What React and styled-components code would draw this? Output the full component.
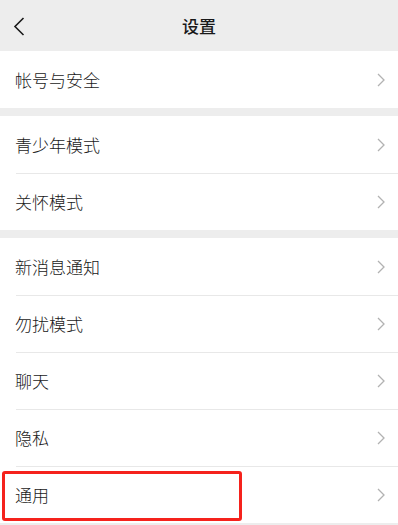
import styled, { createGlobalStyle } from "styled-components"

const Global = createGlobalStyle`
  html, body {
    margin: 0;
    padding: 0;
    background: #ededed;
    font-family: "Noto Sans CJK SC", "Noto Sans", sans-serif;
  }
`

const Page = styled.div`
  width: 398px;
  min-height: 525px;
  background: #ededed;
`

const Header = styled.header`
  height: 51px;
  display: flex;
  align-items: center;
  justify-content: center;
  position: relative;
`

const Back = styled.button`
  position: absolute;
  left: 8px;
  top: 13px;
  width: 22px;
  height: 26px;
  border: none;
  background: none;
  padding: 0;
  display: flex;
  align-items: center;
  justify-content: center;
`

const Title = styled.h1`
  margin: 0;
  font-size: 17px;
  font-weight: 500;
  color: #191919;
`

const Section = styled.div`
  background: #fff;
  margin-bottom: 8px;
`

const Row = styled.div`
  height: 57px;
  display: flex;
  align-items: center;
  justify-content: space-between;
  padding: 0 13px 0 15px;
  position: relative;
  box-sizing: border-box;

  & + &::before {
    content: "";
    position: absolute;
    top: 0;
    left: 16px;
    right: 0;
    height: 1px;
    background: #e8e8e8;
  }
`

const Label = styled.span`
  font-size: 17px;
  font-weight: 300;
  color: #191919;
`

const Highlight = styled.div`
  position: absolute;
  left: 2px;
  top: 5px;
  width: 240px;
  height: 50px;
  border: 3px solid #f5221c;
  border-radius: 3px;
  box-sizing: border-box;
`

const Chevron = () => (
  <svg width="8" height="14" viewBox="0 0 8 14">
    <path d="M1 1 L7 7 L1 13" fill="none" stroke="#b2b2b2" strokeWidth="1.3" />
  </svg>
)

const groups = [
  ["帐号与安全"],
  ["青少年模式", "关怀模式"],
  ["新消息通知", "勿扰模式", "聊天", "隐私", "通用"],
]

export default function App() {
  return (
    <Page>
      <Global />
      <Header>
        <Back>
          <svg width="12" height="19" viewBox="0 0 12 19">
            <path d="M10.5 1 L2 9.5 L10.5 18" fill="none" stroke="#191919" strokeWidth="1.6" />
          </svg>
        </Back>
        <Title>设置</Title>
      </Header>
      {groups.map((items, i) => (
        <Section key={i}>
          {items.map((name) => (
            <Row key={name}>
              <Label>{name}</Label>
              <Chevron />
              {name === "通用" && <Highlight />}
            </Row>
          ))}
        </Section>
      ))}
    </Page>
  )
}
